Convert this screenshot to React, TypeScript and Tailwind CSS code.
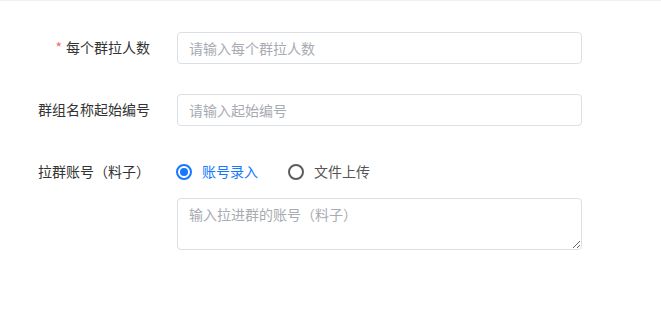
import React from "react";

const font = { fontFamily: '"Noto Sans CJK SC", "Noto Sans", sans-serif' };

function Radio({ checked, label }: { checked?: boolean; label: string }) {
  return (
    <label className="flex items-center cursor-pointer">
      {checked ? (
        <span className="w-[16px] h-[16px] rounded-full border-[2px] border-[#1677ff] flex items-center justify-center">
          <span className="w-[8px] h-[8px] rounded-full bg-[#1677ff]" />
        </span>
      ) : (
        <span className="w-[16px] h-[16px] rounded-full border-[2.5px] border-[#5c5c5c]" />
      )}
      <span className={`ml-[10px] text-[14px] ${checked ? "text-[#1677ff]" : "text-[#555]"}`}>{label}</span>
    </label>
  );
}

export default function App() {
  return (
    <div className="w-[661px] h-[310px] bg-white border-t border-[#f0f0f0]" style={font}>
      <div className="pt-[31px] flex flex-col">
        <div className="flex items-center h-[32px]">
          <div className="w-[150px] text-right text-[14px] text-[#333] -mt-[1px]">
            <span className="text-[#f56c6c] mr-[4px]">*</span>每个群拉人数
          </div>
          <input
            className="ml-[27px] w-[405px] h-[32px] border border-[#dcdfe6] rounded-[4px] px-[11px] text-[14px] outline-none placeholder:text-[#a8abb2]"
            placeholder="请输入每个群拉人数"
          />
        </div>
        <div className="flex items-center h-[32px] mt-[30px]">
          <div className="w-[150px] text-right text-[14px] text-[#333] -mt-[1px]">群组名称起始编号</div>
          <input
            className="ml-[27px] w-[405px] h-[32px] border border-[#dcdfe6] rounded-[4px] px-[11px] text-[14px] outline-none placeholder:text-[#a8abb2]"
            placeholder="请输入起始编号"
          />
        </div>
        <div className="flex mt-[30px]">
          <div className="w-[150px] h-[31px] flex items-center text-[14px] text-[#333]">
            <span className="ml-[38px]">拉群账号（料子）</span>
          </div>
          <div className="ml-[27px] flex flex-col">
            <div className="h-[31px] flex items-center gap-[30px] -ml-[1px]">
              <Radio checked label="账号录入" />
              <Radio label="文件上传" />
            </div>
            <textarea
              className="mt-[11px] w-[405px] h-[52px] border border-[#dcdfe6] rounded-[4px] px-[11px] py-[4px] text-[14px] leading-[22px] outline-none placeholder:text-[#a8abb2]"
              placeholder="输入拉进群的账号（料子）"
              style={font}
            />
          </div>
        </div>
      </div>
    </div>
  );
}
